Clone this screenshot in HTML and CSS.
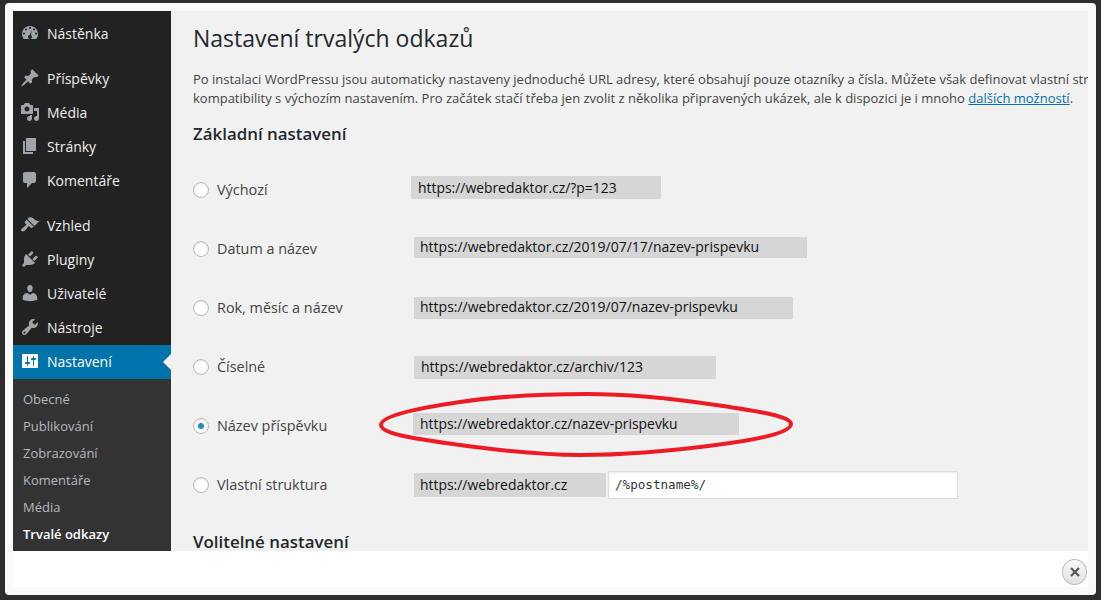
FILE: index.html
```html
<!DOCTYPE html>
<html lang="cs">
<head>
<meta charset="utf-8">
<title>Nastavení trvalých odkazů</title>
<link rel="stylesheet" href="styles.css">
</head>
<body>
<div class="modal">
  <div class="viewport">
    <nav class="sidebar">
      <ul class="menu menu-first">
        <li class="item"><svg class="icon" viewBox="0 0 20 20"><path fill-rule="evenodd" d="M3.76 16h12.48c1.1-1.37 1.76-3.11 1.76-5 0-4.42-3.58-8-8-8s-8 3.58-8 8c0 1.89.66 3.63 1.76 5zM10 4c.55 0 1 .45 1 1s-.45 1-1 1-1-.45-1-1 .45-1 1-1zM6 5.5c.55 0 1 .45 1 1s-.45 1-1 1-1-.45-1-1 .45-1 1-1zm8 0c.55 0 1 .45 1 1s-.45 1-1 1-1-.45-1-1 .45-1 1-1zM4 9.5c.55 0 1 .45 1 1s-.45 1-1 1-1-.45-1-1 .45-1 1-1zm12 0c.55 0 1 .45 1 1s-.45 1-1 1-1-.45-1-1 .45-1 1-1zM12 7l-1.2 5.2c.7.3 1.2 1 1.2 1.8 0 1.1-.9 2-2 2s-2-.9-2-2c0-1 .7-1.8 1.6-2z"/></svg>Nástěnka</li>
      </ul>
      <ul class="menu">
        <li class="item"><svg class="icon" viewBox="0 0 20 20"><path d="M10.44 3.02l1.82-1.82 6.36 6.35-1.83 1.82c-1.05-.68-2.48-.57-3.41.36l-.75.75c-.92.93-1.04 2.35-.35 3.41l-1.83 1.82-2.41-2.41-2.8 2.79c-.42.42-3.38 2.71-3.8 2.29s1.86-3.39 2.28-3.81l2.79-2.79L4.1 9.36l1.83-1.82c1.05.69 2.48.57 3.4-.36l.75-.75c.93-.92 1.05-2.35.36-3.41z"/></svg>Příspěvky</li>
        <li class="item"><svg class="icon" viewBox="0 0 20 20"><path fill-rule="evenodd" d="M13 11V4c0-.55-.45-1-1-1h-1.67L9 1H5L3.67 3H2c-.55 0-1 .45-1 1v7c0 .55.45 1 1 1h10c.55 0 1-.45 1-1zM7 4.5c1.38 0 2.5 1.12 2.5 2.5S8.38 9.5 7 9.5 4.5 8.38 4.5 7 5.62 4.5 7 4.5zM14 6h5v10.5c0 1.38-1.12 2.5-2.5 2.5S14 17.88 14 16.5s1.12-2.5 2.5-2.5c.17 0 .34.02.5.05V9h-3V6zm-4 8.05V13h2v3.5c0 1.38-1.12 2.5-2.5 2.5S7 17.88 7 16.5 8.12 14 9.5 14c.17 0 .34.02.5.05z"/></svg>Média</li>
        <li class="item"><svg class="icon" viewBox="0 0 20 20"><path d="M6 15V2h10v13H6zm-1 1h8v2H3V5h2v11z"/></svg>Stránky</li>
        <li class="item"><svg class="icon" viewBox="0 0 20 20"><path d="M5 2h9c1.1 0 2 .9 2 2v7c0 1.1-.9 2-2 2h-2l-5 5v-5H5c-1.1 0-2-.9-2-2V4c0-1.1.9-2 2-2z"/></svg>Komentáře</li>
      </ul>
      <ul class="menu">
        <li class="item"><svg class="icon" viewBox="0 0 20 20"><path d="M14.48 11.06L7.41 3.99l1.5-1.5c.5-.56 2.3-.47 3.51.32 1.21.8 1.43 1.28 2.91 2.1 1.18.64 2.45 1.26 4.45.85zm-.71.71L6.7 4.7 4.93 6.47c-.39.39-.39 1.02 0 1.41l1.06 1.06c.39.39.39 1.03 0 1.42-.6.6-1.43 1.11-2.21 1.69-.35.26-.7.53-1.01.84C1.43 13.23.4 14.91 1.53 16.05c1.14 1.14 2.82.1 4.16-1.24.31-.31.58-.66.85-1.01.57-.78 1.08-1.61 1.69-2.21.39-.39 1.02-.39 1.41 0l1.06 1.06c.39.39 1.02.39 1.41 0z"/></svg>Vzhled</li>
        <li class="item"><svg class="icon" viewBox="0 0 20 20"><path d="M13.11 4.36L9.87 7.6 8 5.73l3.24-3.24c.35-.34 1.05-.2 1.56.32.52.51.66 1.21.31 1.55zm-8 1.77l.91-1.12 9.01 9.01-1.19.84c-.71.71-2.63 1.16-3.82 1.16H6.14L4.9 17.26c-.59.59-1.54.59-2.12 0-.59-.58-.59-1.53 0-2.12l1.24-1.24v-3.88c0-1.13.4-3.19 1.09-3.89zm7.26 3.97l3.24-3.24c.34-.35 1.04-.21 1.55.31.52.51.66 1.21.31 1.55l-3.24 3.25z"/></svg>Pluginy</li>
        <li class="item"><svg class="icon" viewBox="0 0 20 20"><path d="M10 9.25c-2.27 0-2.73-3.44-2.73-3.44C7 4.02 7.82 2 9.97 2c2.16 0 2.98 2.02 2.71 3.81 0 0-.41 3.44-2.68 3.44zm0 2.57L12.72 10c2.39 0 4.52 2.33 4.52 4.53v2.49s-3.65 1.13-7.24 1.13c-3.65 0-7.24-1.13-7.24-1.13v-2.49c0-2.25 1.94-4.48 4.47-4.48z"/></svg>Uživatelé</li>
        <li class="item"><svg class="icon" viewBox="0 0 20 20"><path fill-rule="evenodd" d="M16.68 9.77c-1.34 1.34-3.3 1.67-4.95.99l-5.41 6.52c-.99.99-2.59.99-3.58 0s-.99-2.59 0-3.57l6.52-5.42c-.68-1.65-.35-3.61.99-4.95 1.28-1.28 3.12-1.62 4.72-1.06l-2.89 2.89 2.82 2.82 2.86-2.87c.53 1.58.18 3.39-1.08 4.65zM3.81 16.21c.4.39 1.04.39 1.43 0 .4-.4.4-1.04 0-1.43-.39-.4-1.03-.4-1.43 0-.39.39-.39 1.03 0 1.43z"/></svg>Nástroje</li>
        <li class="item item-active"><svg class="icon" viewBox="0 0 20 20"><path fill-rule="evenodd" d="M18 16V4c0-.55-.45-1-1-1H3c-.55 0-1 .45-1 1v12c0 .55.45 1 1 1h14c.55 0 1-.45 1-1zM8 11h1c.55 0 1 .45 1 1s-.45 1-1 1H8v1.5c0 .28-.22.5-.5.5s-.5-.22-.5-.5V13H6c-.55 0-1-.45-1-1s.45-1 1-1h1V5.5c0-.28.22-.5.5-.5s.5.22.5.5V11zm5-2h-1c-.55 0-1-.45-1-1s.45-1 1-1h1V5.5c0-.28.22-.5.5-.5s.5.22.5.5V7h1c.55 0 1 .45 1 1s-.45 1-1 1h-1v5.5c0 .28-.22.5-.5.5s-.5-.22-.5-.5V9z"/></svg>Nastavení</li>
      </ul>
      <ul class="submenu">
        <li>Obecné</li>
        <li>Publikování</li>
        <li>Zobrazování</li>
        <li>Komentáře</li>
        <li>Média</li>
        <li class="sub-current">Trvalé odkazy</li>
      </ul>
    </nav>
    <main class="content">
      <h1 class="title">Nastavení trvalých odkazů</h1>
      <p class="intro">Po instalaci WordPressu jsou automaticky nastaveny jednoduché URL adresy, které obsahují pouze otazníky a čísla. Můžete však definovat vlastní struktury<br>kompatibility s výchozím nastavením. Pro začátek stačí třeba jen zvolit z několika připravených ukázek, ale k dispozici je i mnoho <a class="link" href="#">dalších možností</a>.</p>
      <h2 class="section">Základní nastavení</h2>
      <div class="rows">
        <div class="row"><span class="radio"></span><span class="label">Výchozí</span><span class="url url-a">https://webredaktor.cz/?p=123</span></div>
        <div class="row"><span class="radio"></span><span class="label">Datum a název</span><span class="url url-b">https://webredaktor.cz/2019/07/17/nazev-prispevku</span></div>
        <div class="row"><span class="radio"></span><span class="label">Rok, měsíc a název</span><span class="url url-c">https://webredaktor.cz/2019/07/nazev-prispevku</span></div>
        <div class="row"><span class="radio"></span><span class="label">Číselné</span><span class="url url-d">https://webredaktor.cz/archiv/123</span></div>
        <div class="row"><span class="radio radio-on"></span><span class="label">Název příspěvku</span><span class="url url-e">https://webredaktor.cz/nazev-prispevku</span></div>
        <div class="row"><span class="radio"></span><span class="label">Vlastní struktura</span><span class="url url-f">https://webredaktor.cz</span><span class="struct">/%postname%/</span></div>
      </div>
      <h2 class="section section-next">Volitelné nastavení</h2>
      <svg class="circle" viewBox="0 0 420 70" width="420" height="70"><path d="M5 35C5 25 50 17 84 12C125 6 170 4 211 4C255 4 300 9 340 15C380 21 415 26 415 34C415 43 380 50 340 55C295 61 250 65 204 65C160 65 120 60 84 55C50 50 5 45 5 35z"/></svg>
    </main>
  </div>
  <footer class="footer"><button class="close" aria-label="Zavřít"><svg viewBox="0 0 12 12" width="12" height="12"><path d="M2 2l8 8M10 2l-8 8"/></svg></button></footer>
</div>
</body>
</html>
```
FILE: styles.css
```css
* { box-sizing: border-box; }
html, body { margin: 0; height: 100%; }
body { background: #2d2d2d; overflow: hidden; font-family: "Open Sans", sans-serif; }
.modal { position: relative; margin: 3px 5px 0; width: 1091px; height: 592px; background: #f9f9f9; border-radius: 4px; padding: 8px; display: flex; flex-direction: column; }
.viewport { display: flex; height: 540px; flex: none; overflow: hidden; background: #f1f1f1; }
.sidebar { width: 158px; flex: none; background: #222; color: #eee; overflow: hidden; }
.menu { list-style: none; margin: 0 0 11px; padding: 0; }
.menu-first { padding-top: 6px; }
.item { height: 34px; display: flex; align-items: center; gap: 7px; padding: 0 0 2px 7px; font-size: 14px; color: #eee; position: relative; }
.icon { width: 20px; height: 20px; fill: #a0a5aa; flex: none; }
.item-active { background: #0073aa; color: #fff; }
.item-active .icon { fill: #fff; }
.item-active::after { content: ""; position: absolute; right: 0; top: 9px; border: 8px solid transparent; border-right-color: #f1f1f1; border-left-width: 0; }
.menu:nth-child(3) { margin-bottom: 0; }
.submenu { list-style: none; margin: 0; padding: 7px 0 0 10px; background: #333; font-size: 13px; color: #b4b9be; height: 172px; }
.submenu li { height: 27px; line-height: 26px; }
.sub-current { color: #fff; font-weight: 600; }
.content { position: relative; flex: 1; min-width: 0; padding: 0 0 0 22px; color: #444; overflow: hidden; }
.title { margin: 12px 0 0; font-size: 23px; font-weight: 400; line-height: 31px; color: #23282d; }
.intro { margin: 16px 0 0; font-size: 13px; line-height: 19px; white-space: nowrap; color: #444; }
.link { color: #0073aa; }
.section { margin: 15px 0 0; font-size: 16.9px; font-weight: 600; line-height: 21px; color: #23282d; }
.section-next { margin-top: 17px; }
.rows { margin-top: 16px; }
.row { height: 59px; display: flex; align-items: center; font-size: 14.4px; color: #444; }
.radio { width: 16px; height: 16px; border-radius: 50%; border: 1px solid #b4b9be; background: #fff; flex: none; margin-right: 8px; box-shadow: inset 0 1px 2px rgba(0,0,0,.1); position: relative; }
.radio-on::after { content: ""; position: absolute; left: 4px; top: 4px; width: 6px; height: 6px; border-radius: 50%; background: #1e8cbe; }
.label { width: 194px; flex: none; }
.url { background: #d6d6d6; color: #111; font-size: 14px; display: block; align-self: flex-start; padding-left: 6px; flex: none; }
.url-a { width: 250px; height: 23px; line-height: 23px; margin-top: 16px; padding-left: 7px; font-size: 13.9px; }
.url-b { margin: 18px 0 0 3px; width: 393px; height: 21px; line-height: 20px; }
.url-c { margin: 19px 0 0 3px; width: 379px; height: 22px; line-height: 20px; }
.url-d { margin: 19px 0 0 3px; width: 302px; height: 23px; line-height: 21px; padding-left: 7px; }
.url-e { margin: 17px 0 0 2px; width: 326px; height: 22px; line-height: 22px; padding-left: 7px; font-size: 13.9px; }
.url-f { margin: 18px 0 0 3px; width: 192px; height: 24px; line-height: 23px; font-size: 13.9px; }
.struct { margin-left: 2px; width: 350px; height: 28px; line-height: 26px; background: #fff; border: 1px solid #ddd; padding-left: 6px; font-family: "DejaVu Sans Mono", monospace; font-size: 12.6px; color: #32373c; box-shadow: inset 0 1px 2px rgba(0,0,0,.07); flex: none; }
.circle { position: absolute; left: 205px; top: 379px; fill: none; stroke: #ed1c24; stroke-width: 4; }
.footer { flex: none; height: 36px; display: flex; justify-content: flex-end; align-items: flex-end; padding: 0 1px 2px 0; background: #fff; }
.close { width: 25px; height: 26px; padding: 0; border-radius: 50%; border: 1px solid #bbb; background: linear-gradient(#f8f8f8, #e2e2e2); display: flex; align-items: center; justify-content: center; }
.close path { fill: none; stroke: #555; stroke-width: 2.2; }
```
